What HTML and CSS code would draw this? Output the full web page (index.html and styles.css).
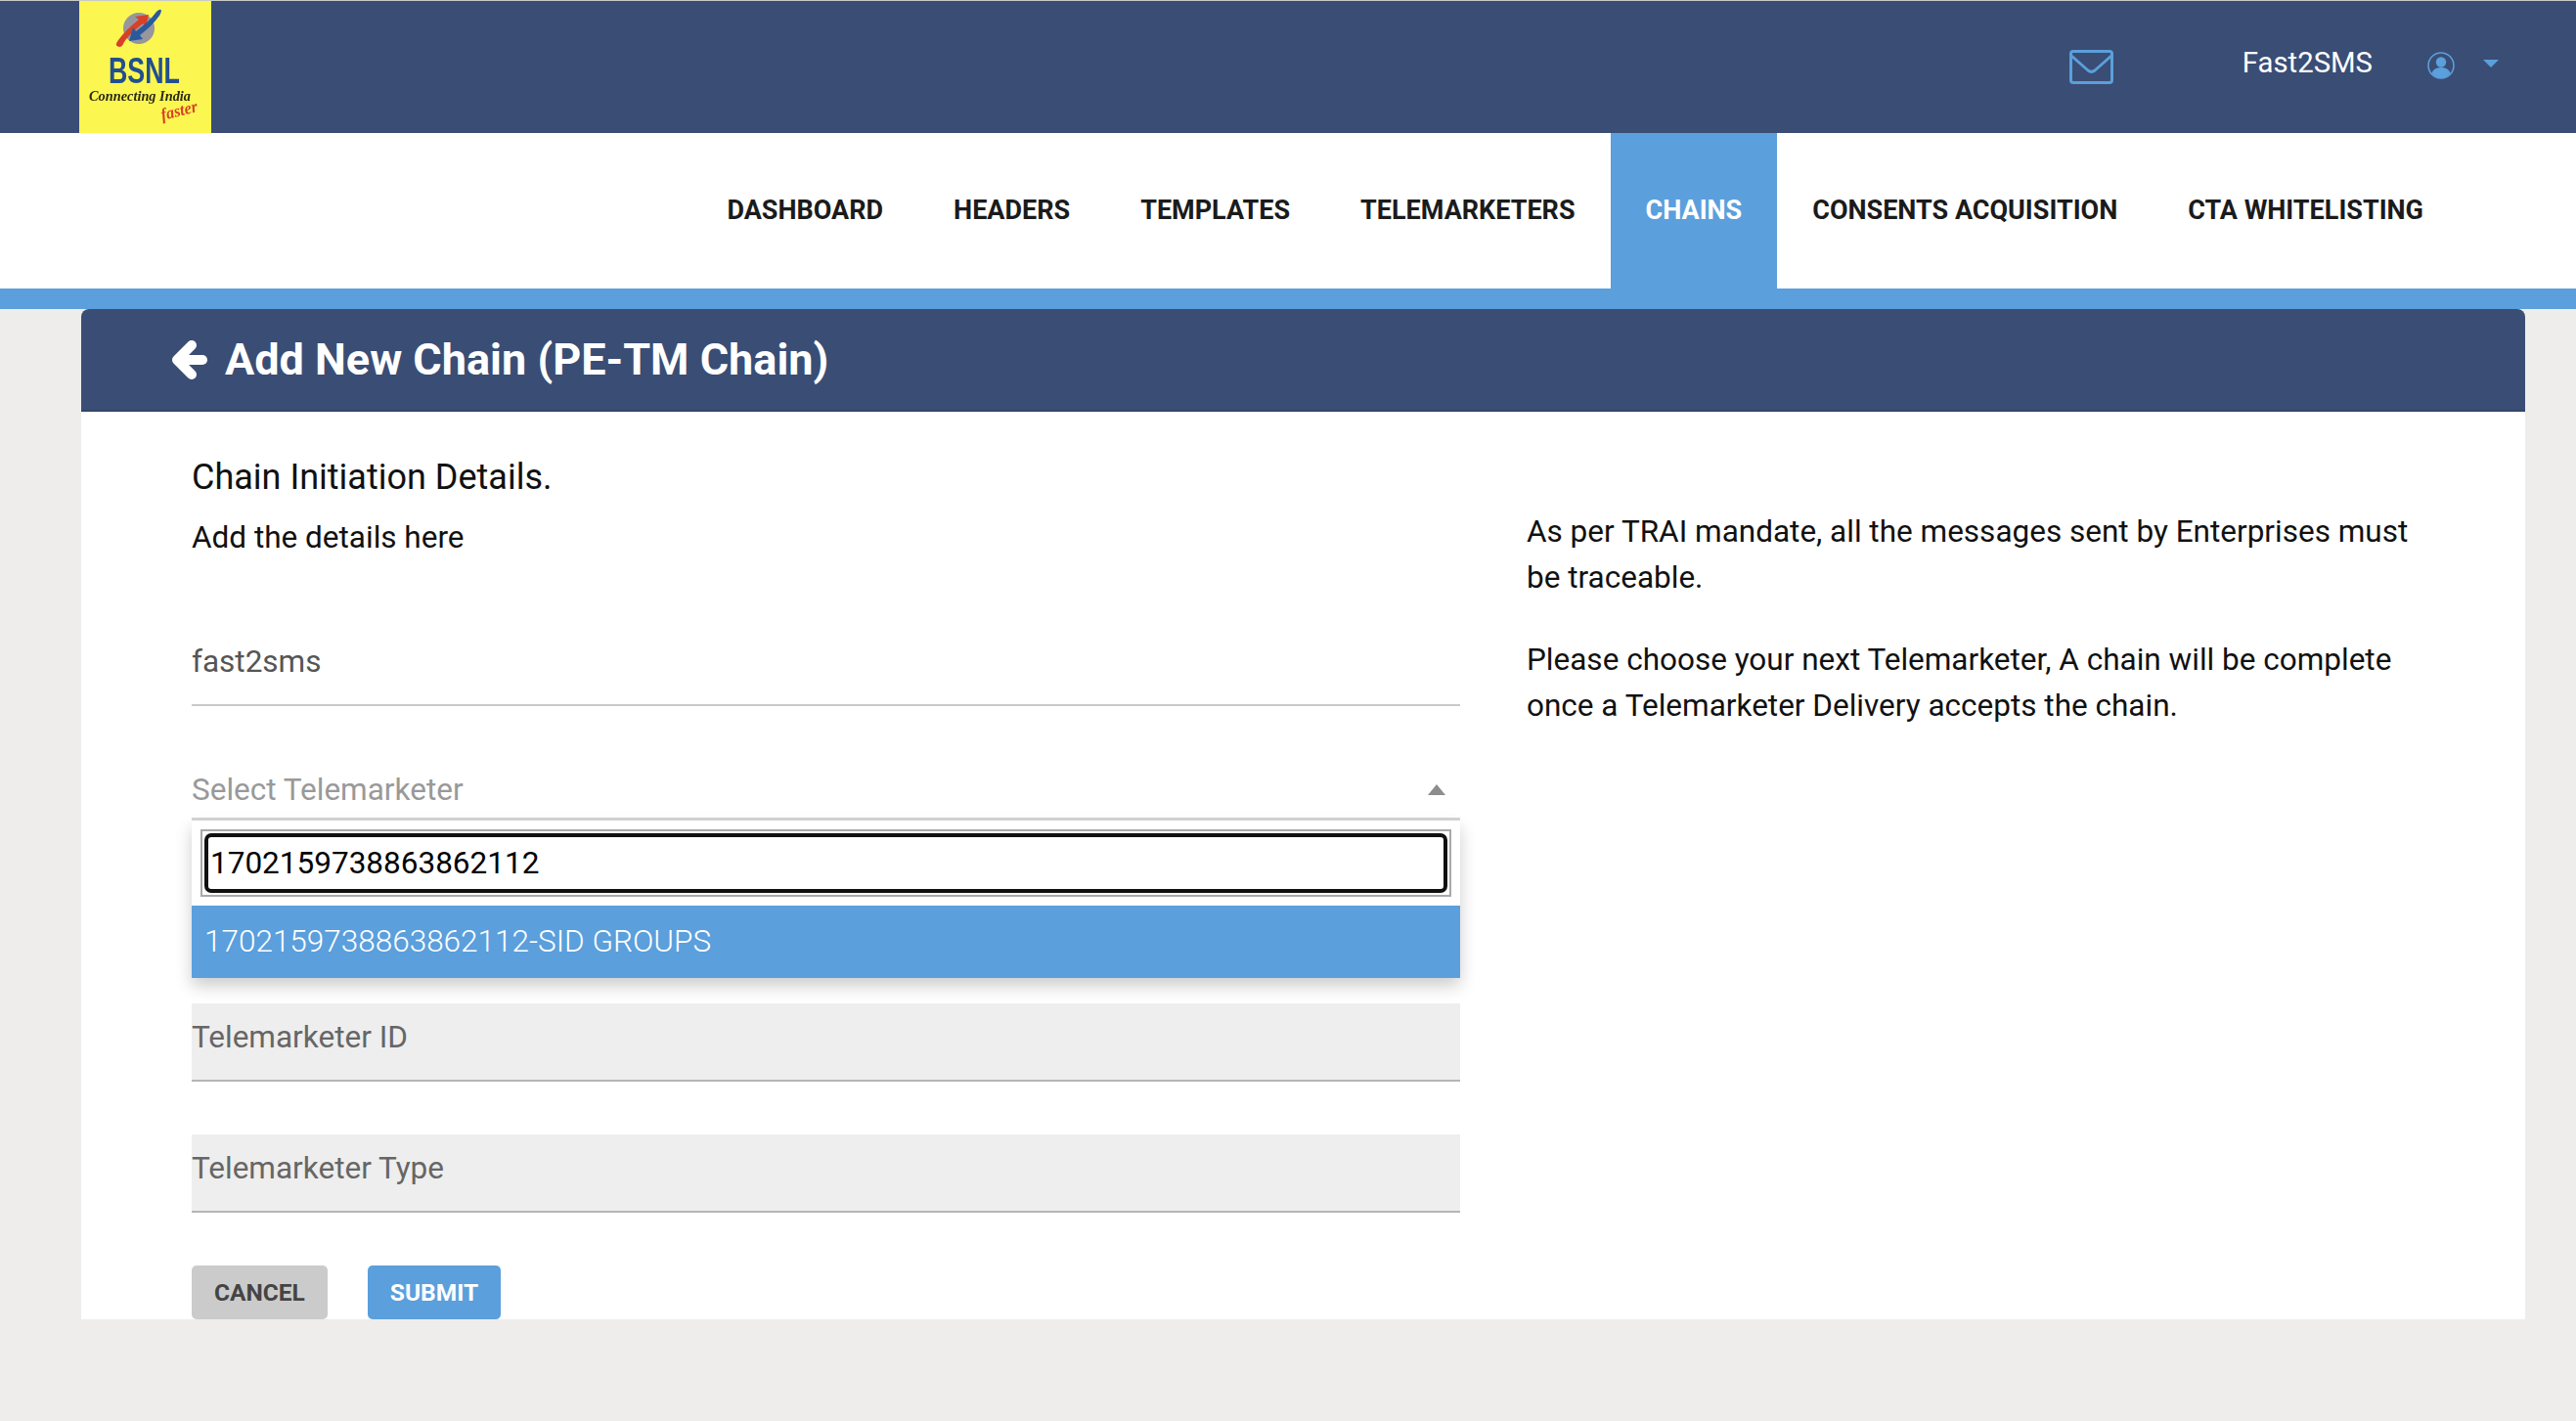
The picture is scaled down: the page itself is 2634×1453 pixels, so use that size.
FILE: index.html
```html
<!DOCTYPE html>
<html lang="en">
<head>
<meta charset="utf-8">
<title>Add New Chain</title>
<link rel="stylesheet" href="styles.css">
</head>
<body>
<header class="topbar">
  <svg class="logo" viewBox="0 0 135 135" aria-label="BSNL logo">
    <defs><filter id="soft"><feGaussianBlur stdDeviation="0.4"/></filter></defs>
    <rect width="135" height="135" fill="#fbf650"/>
    <g filter="url(#soft)">
      <circle cx="61" cy="28" r="16" fill="#96979c"/>
      <path d="M41 47c-4-1-4-3-1-7 5-7 12-14 21-21l-4-3 14-2-3 13-3-4C56 30 47 39 45 44c-1 2-2 3-4 3z" fill="#d8402a"/>
      <path d="M82 9c3-1 2 3 0 6-5 7-12 14-20 20l3 4-14 2 4-14 3 4c8-6 16-13 21-20 1-1 2-2 3-2z" fill="#2a5a9c"/>
      <text x="30" y="84" class="logo-name" textLength="73" lengthAdjust="spacingAndGlyphs">BSNL</text>
      <text x="10" y="102" class="logo-tag" textLength="104" lengthAdjust="spacingAndGlyphs">Connecting India</text>
      <text x="85" y="122" class="logo-fast" textLength="38" lengthAdjust="spacingAndGlyphs" transform="rotate(-14 85 122)">faster</text>
    </g>
  </svg>
  <div class="top-right">
    <svg class="mail" viewBox="0 0 45 35" fill="none" stroke="#5b9fdc" stroke-width="3" stroke-linejoin="round" stroke-linecap="round">
      <rect x="1.5" y="1.5" width="42" height="32" rx="2.5"/>
      <path d="M2 6l17 15c2 1.600 5 1.600 7 0L43 6"/>
    </svg>
    <span class="username">Fast2SMS</span>
    <svg class="avatar" viewBox="0 0 28 28">
      <circle cx="14" cy="14" r="13" fill="none" stroke="#5b9fdc" stroke-width="1.600"/>
      <circle cx="14" cy="10.500" r="5.200" fill="#5b9fdc"/>
      <path d="M4.500 22c1-4 5-6 9.500-6s8.500 2 9.500 6c-2.500 3-6 5-9.500 5s-7-2-9.500-5z" fill="#5b9fdc"/>
    </svg>
    <span class="caret"></span>
  </div>
</header>

<nav class="nav">
  <a class="nav-item">DASHBOARD</a>
  <a class="nav-item">HEADERS</a>
  <a class="nav-item">TEMPLATES</a>
  <a class="nav-item">TELEMARKETERS</a>
  <a class="nav-item active">CHAINS</a>
  <a class="nav-item">CONSENTS ACQUISITION</a>
  <a class="nav-item">CTA WHITELISTING</a>
</nav>

<main class="card">
  <div class="card-head">
    <svg class="back" viewBox="0 0 37 42" fill="none" stroke="#fff" stroke-width="10" stroke-linecap="round" stroke-linejoin="round"><path d="M21 6 L6 21 L21 36"/><path d="M8 21 H32"/></svg>
    <h1 class="title">Add New Chain (PE-TM Chain)</h1>
  </div>
  <div class="card-body">
    <section class="form-col">
      <h2 class="form-title">Chain Initiation Details.</h2>
      <p class="form-sub">Add the details here</p>
      <div class="field-plain">fast2sms</div>
      <div class="select">
        <div class="select-head">
          <span>Select Telemarketer</span>
          <span class="select-arrow"></span>
        </div>
        <div class="dropdown">
          <div class="search-wrap">
            <div class="search-box">
              <input class="search" type="text" value="1702159738863862112">
            </div>
          </div>
          <div class="option">1702159738863862112-SID GROUPS</div>
        </div>
      </div>
      <div class="field-off">Telemarketer ID</div>
      <div class="field-off">Telemarketer Type</div>
      <div class="actions">
        <button class="btn btn-cancel">CANCEL</button>
        <button class="btn btn-submit">SUBMIT</button>
      </div>
    </section>
    <aside class="info-col">
      <p class="info">As per TRAI mandate, all the messages sent by Enterprises must be traceable.</p>
      <p class="info">Please choose your next Telemarketer, A chain will be complete once a Telemarketer Delivery accepts the chain.</p>
    </aside>
  </div>
</main>
</body>
</html>
```
FILE: styles.css
```css
* { box-sizing: border-box; }
html, body { margin: 0; padding: 0; }
body {
  min-height: 1453px;
  background: #eeedeb;
  font-family: Roboto, "Liberation Sans", sans-serif;
  color: #111;
}
.topbar {
  height: 136px;
  border-top: 1px solid #c9c9c9;
  background: #3a4d75;
  padding-left: 81px;
  display: flex;
  align-items: stretch;
  justify-content: space-between;
}
.logo { width: 135px; height: 135px; display: block; }
.logo-name { font: 700 36px "Liberation Sans", sans-serif; fill: #24508f; }
.logo-tag { font: italic 700 15.500px "Liberation Serif", serif; fill: #2b2a14; }
.logo-fast { font: italic 700 17px "Liberation Serif", serif; fill: #d8402a; }
.top-right {
  display: flex;
  align-items: center;
  padding-right: 79px;
}
.mail { width: 45px; height: 35px; margin-bottom: 1px; }
.username {
  margin-left: 132px;
  color: #fff;
  font-size: 29.300px;
  line-height: 36px;
  margin-bottom: 10px;
}
.avatar { width: 28px; height: 28px; margin-left: 56px; margin-top: -3px; }
.caret {
  margin-left: 29px;
  margin-top: -8px;
  border-left: 8px solid transparent;
  border-right: 8px solid transparent;
  border-top: 8px solid #5b9fdc;
}
.nav {
  height: 180px;
  background: #fff;
  border-bottom: 21px solid #5b9fdc;
  display: flex;
  justify-content: flex-end;
  padding-right: 120px;
}
.nav-item {
  padding: 0 36px 2px;
  display: flex;
  align-items: center;
  font-size: 27px;
  font-weight: 700;
  color: #1b1b1b;
}
.nav-item.active { background: #5b9fdc; color: #fff; }
.card {
  margin: 0 52px 0 83px;
  height: 1033px;
  background: #fff;
  border-radius: 8px 8px 0 0;
}
.card-head {
  height: 105px;
  background: #3a4d75;
  border-bottom: 2px solid #33456b;
  border-radius: 8px 8px 0 0;
  padding-left: 92px;
  display: flex;
  align-items: center;
}
.back { width: 37px; height: 42px; margin-right: 18px; }
.title {
  margin: 0;
  color: #fff;
  font-size: 45px;
  font-weight: 700;
  line-height: 52px;
}
.card-body {
  display: flex;
  padding: 42px 113px 0;
  gap: 68px;
}
.form-col { width: 1297px; flex: none; }
.info-col { flex: 1; }
.form-title {
  margin: 0;
  font-size: 36px;
  font-weight: 400;
  line-height: 50px;
}
.form-sub {
  margin: 13px 0 0;
  font-size: 31.500px;
  line-height: 48px;
}
.field-plain {
  margin-top: 65px;
  height: 83px;
  border-bottom: 2px solid #c9c9c9;
  font-size: 31.500px;
  line-height: 75px;
  color: #555;
}
.select { margin-top: 43px; position: relative; height: 261px; }
.select-head {
  height: 74px;
  display: flex;
  justify-content: space-between;
  align-items: center;
  padding: 14px 15px 0 0;
  border-bottom: 3px solid #d5d5d5;
  font-size: 31.500px;
  color: #999;
}
.select-arrow {
  border-left: 9px solid transparent;
  border-right: 9px solid transparent;
  border-bottom: 11px solid #8d8d8d;
}
.dropdown {
  background: #fff;
  box-shadow: 0 8px 16px rgba(0,0,0,.2);
  position: absolute;
  left: 0;
  right: 0;
  z-index: 2;
}
.search-wrap { padding: 9px; }
.search-box {
  height: 69px;
  border: 2px solid #a9a9a9;
  padding: 2px;
}
.search {
  display: block;
  width: 100%;
  height: 100%;
  border: 4px solid #101010;
  border-radius: 7px;
  outline: none;
  background: #fff;
  padding: 0 10px 0 2px;
  font: 400 31.500px Roboto, sans-serif;
  color: #000;
}
.option {
  height: 74px;
  background: #5b9fdc;
  color: #fff;
  font-size: 31.500px;
  font-weight: 300;
  line-height: 74px;
  padding-left: 13px;
}
.field-off {
  height: 80px;
  background: #eee;
  border-bottom: 2px solid #b5b5b5;
  font-size: 31.500px;
  line-height: 69px;
  color: #666;
}
.field-off + .field-off { margin-top: 54px; }
.actions { margin-top: 54px; display: flex; gap: 41px; }
.btn {
  height: 55px;
  border: 0;
  border-radius: 5px;
  padding: 0 23px;
  font: 700 24.500px Roboto, sans-serif;
}
.btn-cancel { background: #cbcbcb; color: #444; }
.btn-submit { background: #5b9fdc; color: #fff; }
.info {
  margin: 0;
  font-size: 31.500px;
  line-height: 47px;
  color: #111;
}
.info:first-child { margin-top: 57px; }
.info + .info { margin-top: 37px; }
```
